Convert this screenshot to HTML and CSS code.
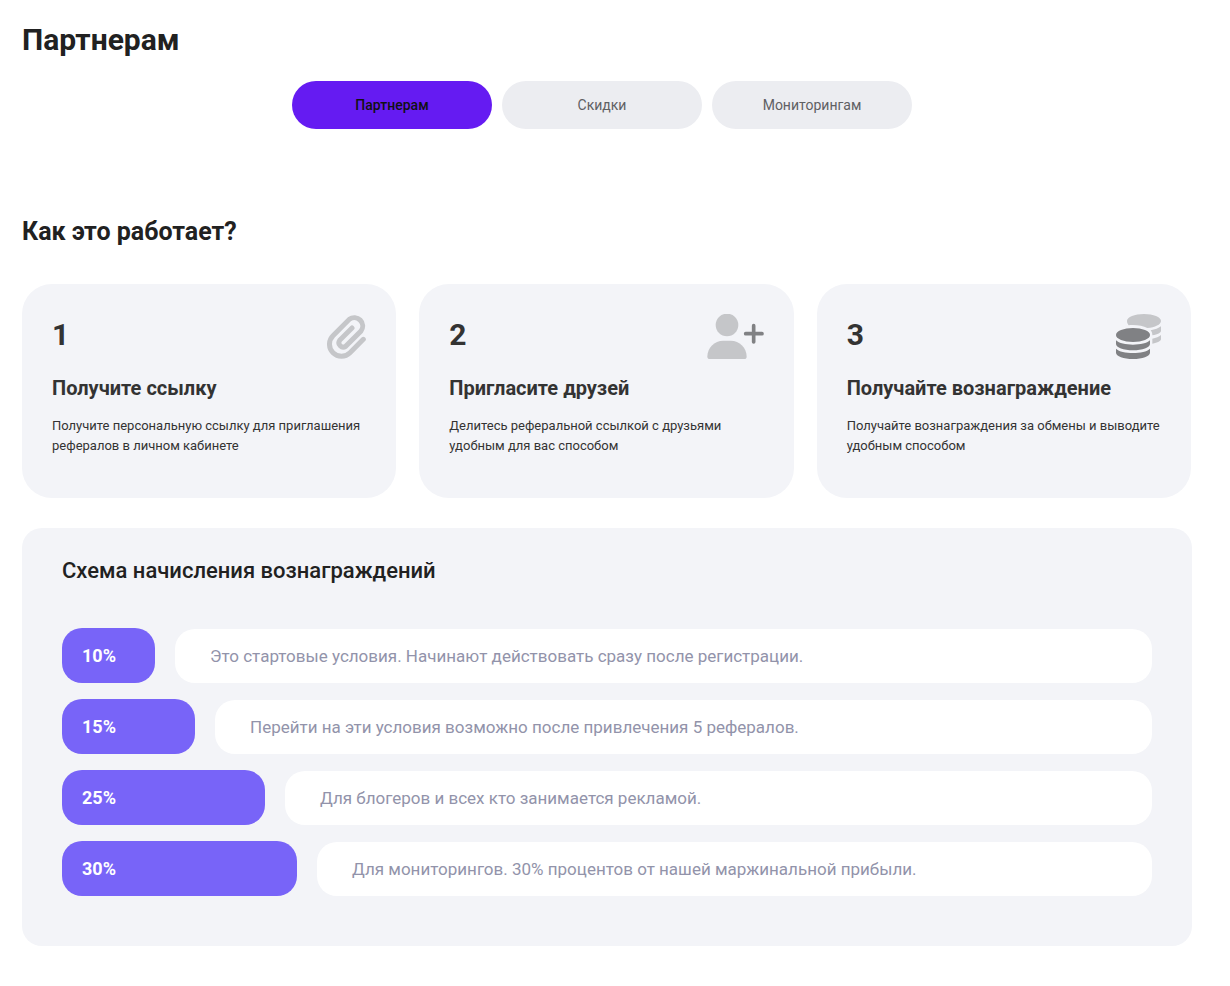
FILE: index.html
```html
<!DOCTYPE html>
<html lang="ru">
<head>
  <meta charset="UTF-8">
  <meta name="viewport" content="width=device-width, initial-scale=1.0">
  <title>Партнерам</title>
  <link rel="stylesheet" href="styles.css">
</head>
<body>
  <main class="page">
    <h1>Партнерам</h1>

    <nav class="tabs">
      <button type="button" class="tab active">Партнерам</button>
      <button type="button" class="tab">Скидки</button>
      <button type="button" class="tab">Мониторингам</button>
    </nav>

    <h2>Как это работает?</h2>

    <section class="steps">
      <article class="step">
        <div class="step-head">
          <span class="step-number">1</span>
          <svg width="39" height="45" viewBox="51 43 117 135" aria-hidden="true">
            <path class="clip" d="M160 119L120 159A36 36 0 0 1 69 108L118 59A25 25 0 0 1 153 94L107 140A13 13 0 0 1 89 122L126 85"/>
          </svg>
        </div>
        <h3>Получите ссылку</h3>
        <p>Получите персональную ссылку для приглашения рефералов в личном кабинете</p>
      </article>

      <article class="step">
        <div class="step-head">
          <span class="step-number">2</span>
          <svg width="57" height="45" viewBox="35 42 171 135" aria-hidden="true">
            <circle class="light" cx="95" cy="75" r="34"/>
            <path class="light" d="M84 122h22c27 0 48 21 48 48c0 4-3 7-7 7H43c-4 0-7-3-7-7c0-27 21-48 48-48z"/>
            <path class="plus" d="M151 101h49M175 77v49"/>
          </svg>
        </div>
        <h3>Пригласите друзей</h3>
        <p>Делитесь реферальной ссылкой с друзьями удобным для вас способом</p>
      </article>

      <article class="step">
        <div class="step-head">
          <span class="step-number">3</span>
          <svg width="45" height="45" viewBox="48 42 135 135" aria-hidden="true">
            <path class="light" d="M81 63c0-12 23-21 51-21s51 9 51 21c0 11-18 19-41 21c-11-6-27-9-43-9c-5 0-9 0-13 1c-3-4-5-8-5-13z"/>
            <path class="light" d="M183 79v14c0 5-10 10-26 13v-2c0-5-2-9-5-13c13-2 24-6 31-12z"/>
            <path class="light" d="M183 105v13c0 5-10 10-26 13v-15c11-2 20-6 26-11z"/>
            <ellipse class="dark" cx="99" cy="105" rx="51" ry="21"/>
            <path class="dark" d="M48 121c9 9 29 13 51 13s42-4 51-13v11c0 11-23 19-51 19s-51-8-51-19z"/>
            <path class="dark" d="M48 146c9 9 29 13 51 13s42-4 51-13v12c0 11-23 19-51 19s-51-8-51-19z"/>
          </svg>
        </div>
        <h3>Получайте вознаграждение</h3>
        <p>Получайте вознаграждения за обмены и выводите удобным способом</p>
      </article>
    </section>

    <section class="scheme">
      <h2 class="scheme-title">Схема начисления вознаграждений</h2>
      <div class="level">
        <div class="percent percent-10">10%</div>
        <div class="level-text">Это стартовые условия. Начинают действовать сразу после регистрации.</div>
      </div>
      <div class="level">
        <div class="percent percent-15">15%</div>
        <div class="level-text">Перейти на эти условия возможно после привлечения 5 рефералов.</div>
      </div>
      <div class="level">
        <div class="percent percent-25">25%</div>
        <div class="level-text">Для блогеров и всех кто занимается рекламой.</div>
      </div>
      <div class="level">
        <div class="percent percent-30">30%</div>
        <div class="level-text">Для мониторингов. 30% процентов от нашей маржинальной прибыли.</div>
      </div>
    </section>
  </main>
</body>
</html>
```

FILE: styles.css
```css
* {
  margin: 0;
  padding: 0;
  box-sizing: border-box;
}

body {
  font-family: Roboto, sans-serif;
  background-color: #fff;
  color: #212121;
}

.page {
  padding: 20px 38px 40px 22px;
}

h1 {
  font-size: 30px;
  line-height: 40px;
  font-weight: 700;
}

h2 {
  font-size: 25px;
  line-height: 30px;
  font-weight: 700;
}

.tabs {
  display: flex;
  justify-content: center;
  margin: 21px 0 88px;
}

.tab {
  width: 200px;
  height: 48px;
  margin-right: 10px;
  border: none;
  border-radius: 24px;
  background-color: #ecedf1;
  color: #5f6063;
  font-family: inherit;
  font-size: 14px;
  cursor: pointer;
}

.tab.active {
  background-color: #651bf2;
  color: #111;
  font-weight: 500;
}

.steps {
  display: grid;
  grid-template-columns: repeat(3, 1fr);
  gap: 23px;
  margin: 37px 1px 30px 0;
}

.step {
  min-height: 214px;
  padding: 30px;
  border-radius: 30px;
  background-color: #f3f4f8;
  color: #333;
}

.step-head {
  display: flex;
  justify-content: space-between;
  align-items: flex-start;
}

.step-number {
  font-size: 30px;
  line-height: 42px;
  font-weight: 700;
}

.step h3 {
  margin: 17px 0 16px;
  font-size: 20px;
  line-height: 24px;
  font-weight: 700;
}

.step p {
  font-size: 13px;
  line-height: 20px;
}

.clip {
  fill: none;
  stroke: #c5c6c9;
  stroke-width: 15;
  stroke-linecap: round;
}

.light {
  fill: #c5c6c9;
}

.dark {
  fill: #808184;
}

.plus {
  fill: none;
  stroke: #808184;
  stroke-width: 11;
  stroke-linecap: round;
}

.scheme {
  padding: 28px 40px 50px;
  border-radius: 20px;
  background-color: #f3f4f8;
}

.scheme-title {
  margin-bottom: 42px;
  font-size: 22px;
  font-weight: 500;
}

.level {
  display: flex;
  align-items: flex-end;
  gap: 20px;
}

.level + .level {
  margin-top: 16px;
}

.percent {
  flex-shrink: 0;
  padding: 0 20px;
  border-radius: 20px;
  background-color: #7864f8;
  color: #fff;
  font-size: 18px;
  line-height: 55px;
  font-weight: 700;
}

.percent-10 {
  width: 93px;
}

.percent-15 {
  width: 133px;
}

.percent-25 {
  width: 203px;
}

.percent-30 {
  width: 235px;
}

.level-text {
  flex: 1;
  padding: 0 35px;
  border-radius: 20px;
  background-color: #fff;
  color: #9293aa;
  font-size: 17px;
  line-height: 54px;
}

@media (max-width: 768px) {
  .steps {
    grid-template-columns: 1fr;
  }
  .level-text {
    padding: 15px 20px;
    line-height: 24px;
  }
}
```
